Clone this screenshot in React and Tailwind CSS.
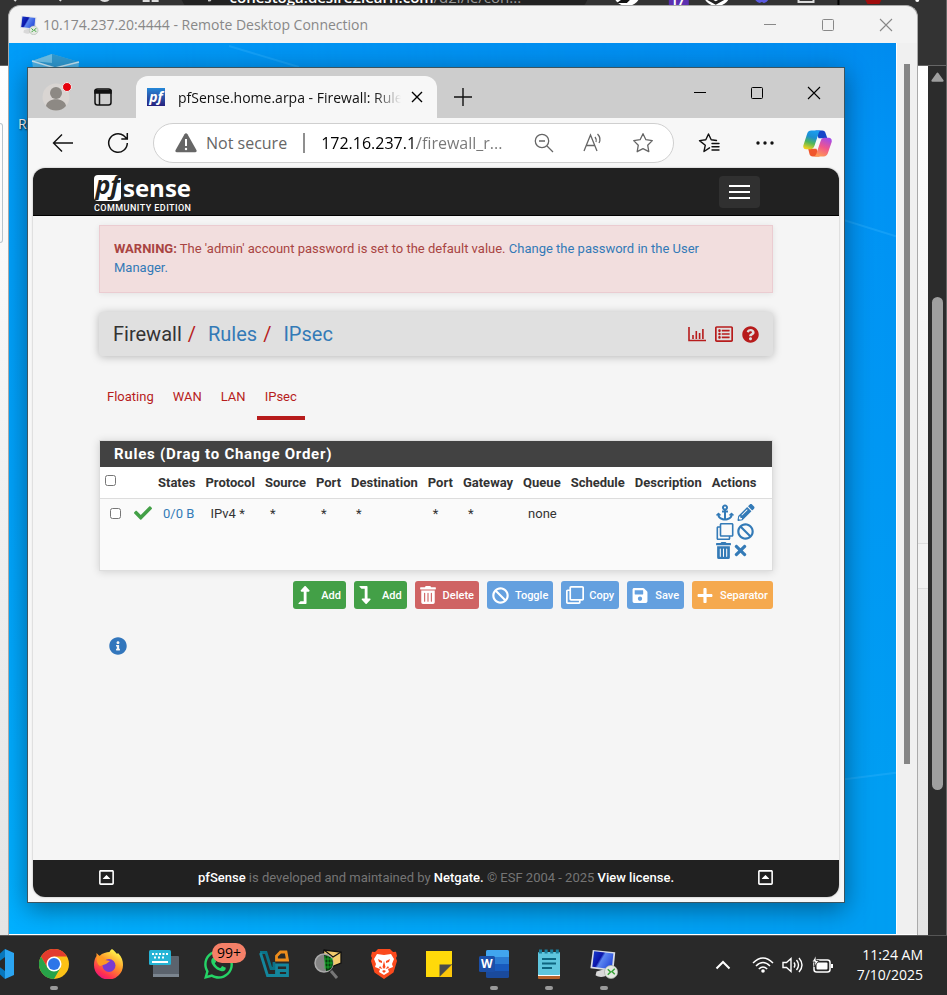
import React from "react";
import {
  FaAnchor, FaPencilAlt, FaRegClone, FaBan, FaTrashAlt, FaTimes, FaCheck, FaLevelUpAlt, FaLevelDownAlt,
  FaSave, FaPlus, FaInfoCircle, FaQuestionCircle, FaRegListAlt, FaRegCaretSquareUp, FaWhatsapp,
} from "react-icons/fa";

const ui = "font-['Open_Sans','Noto_Sans',sans-serif]";

function MinIcon({ size = 14 }) {
  return <svg width={size} height={size} viewBox="0 0 14 14" stroke="currentColor"><path d="M1 6.5h12" /></svg>;
}
function MaxIcon({ size = 14 }) {
  return <svg width={size} height={size} viewBox="0 0 14 14" fill="none" stroke="currentColor"><rect x="1.5" y="1.5" width="11" height="11" rx="1" /></svg>;
}
function CloseIcon({ size = 14 }) {
  return <svg width={size} height={size} viewBox="0 0 14 14" stroke="currentColor" strokeWidth="1.1"><path d="M1 1l12 12M13 1L1 13" /></svg>;
}

function RemoteDesktopIcon({ size }) {
  return (
    <svg width={size} height={size} viewBox="0 0 32 32">
      <defs>
        <linearGradient id="screenBlue" x1="0" y1="0" x2="1" y2="0.5">
          <stop offset="0" stopColor="#1a3fd0" /><stop offset="0.45" stopColor="#0a14a8" /><stop offset="0.55" stopColor="#5b86f0" /><stop offset="1" stopColor="#2c50dc" />
        </linearGradient>
      </defs>
      <path d="M8 24l10-3 3 6c-4 3-10 4-14 1z" fill="#d8d8d8" />
      <path d="M4 1l24 2.500-2 20L1.500 20.500z" fill="#d9dde6" />
      <path d="M5.500 2.500l20.500 2.300-1.700 16.700L3.500 19z" fill="url(#screenBlue)" />
      <circle cx="23.500" cy="24.500" r="7" fill="#e3e8e1" stroke="#a8b0a8" strokeWidth="0.800" />
      <path d="M20 21.500l3 3-3 3M27.500 21l-3 3 3 3" fill="none" stroke="#3aa53a" strokeWidth="1.600" />
    </svg>
  );
}

function CopilotIcon() {
  return (
    <svg width="29" height="29" viewBox="0 0 28 28">
      <defs>
        <linearGradient id="cpA" x1="0.600" y1="0" x2="0.300" y2="1">
          <stop offset="0" stopColor="#1b9df0" /><stop offset="0.350" stopColor="#1d8fd0" /><stop offset="0.650" stopColor="#4fb65a" /><stop offset="1" stopColor="#f4d01c" />
        </linearGradient>
        <linearGradient id="cpB" x1="0.700" y1="0" x2="0.300" y2="1">
          <stop offset="0" stopColor="#a44be8" /><stop offset="0.500" stopColor="#f0568c" /><stop offset="1" stopColor="#ff9a52" />
        </linearGradient>
      </defs>
      <path d="M12 1.500h6.500c2 0 2.800 1 3.300 2.700L23.500 9H15z" fill="#1546c8" />
      <path d="M16 26.500H9.500c-2 0-2.800-1-3.300-2.700L5 19h8z" fill="#f0562c" />
      <path d="M8 1.500h9c-1.500 1-2 2.500-2.500 4.500L11 16.500c-.7 2-1.800 3-3.800 3H3C.8 19.500-.2 18 .4 15.800L4 4.500C4.700 2.500 6 1.500 8 1.500z" fill="url(#cpA)" />
      <path d="M20 26.500h-9c1.500-1 2-2.500 2.500-4.500L17 11.500c.7-2 1.800-3 3.800-3H25c2.200 0 3.200 2 2.600 4.200L24 23.500c-.7 2-2 3-4 3z" fill="url(#cpB)" />
    </svg>
  );
}

function FavStar({ lines }) {
  return lines ? (
    <svg width="22" height="22" viewBox="0 0 22 22" fill="none" stroke="#111" strokeWidth="1.400" strokeLinejoin="round" strokeLinecap="round">
      <path d="M11.500 15.800L6 19.500l1.300-6.300L1.500 8.600l6.300-.8L10.500 2l2.700 5.800 5.300.7" />
      <path d="M14 11.500h7M14 14.700h7M14 18h7" />
    </svg>
  ) : (
    <svg width="22" height="22" viewBox="0 0 22 22" fill="none" stroke="#666" strokeWidth="1.300" strokeLinejoin="round">
      <path d="M11 1.700l2.900 6 6.400.9-4.600 4.600 1.100 6.500-5.800-3-5.800 3 1.100-6.500L1.700 8.600l6.400-.9z" />
    </svg>
  );
}

function HostBrowser() {
  return (
    <div className="flex h-full">
      <div className="flex min-w-0 flex-1 flex-col">
        <div className="h-[66px] shrink-0 overflow-hidden border-b border-[#666] bg-[#333]">
          <div className={`-mt-[15px] flex h-6 items-center text-white ${ui}`}>
            <svg width="180" height="24" viewBox="0 0 180 24" fill="none" stroke="#ddd" strokeWidth="2">
              <path d="M18 10l-5 3 3 3M58 10l4 3-2 3" /><circle cx="105" cy="10" r="6" />
              <path d="M144 8h5v8h-5zM153 8h5v8h-5z" />
            </svg>
            <div className="flex h-9 w-[410px] items-center rounded-b-3xl bg-[#222] pl-[28px]">
              <svg width="22" height="24" viewBox="0 0 22 24"><circle cx="1" cy="14" r="2.500" fill="#ccc" /></svg>
              <span className="text-[15px] leading-6 font-semibold whitespace-nowrap">conestoga.desire2learn.com<span className="font-normal text-[#999]">/d2l/le/con...</span></span>
            </div>
            <svg width="340" height="24" viewBox="590 0 340 24">
              <circle cx="628" cy="7" r="14" fill="#fff" /><path d="M618 18l8-6h8l-6 6z" fill="#111" />
              <rect x="670" y="4" width="20" height="18" fill="#5b2fb0" />
              <text x="672" y="20" fill="#fff" fontSize="12" fontWeight="700">17</text>
              <circle cx="718" cy="7" r="14" fill="#fff" /><path d="M708 13l9 5 9-5" fill="none" stroke="#222" strokeWidth="3" />
              <path d="M757 12q5 8 6 0q2 8 6 0" stroke="#5a5ae0" strokeWidth="4" fill="none" />
              <rect x="800" y="5" width="15" height="12" fill="none" stroke="#ddd" strokeWidth="2" />
              <path d="M840 13v8" stroke="#000" strokeWidth="2" /><path d="M866 13h18l-3 6h-12z" fill="#a00c0c" />
              <circle cx="919" cy="15" r="2" fill="#fff" />
            </svg>
          </div>
        </div>
        <div className="flex flex-1 justify-between bg-gradient-to-b from-white via-[#f0f0f0] to-[#e4e4e4]">
          <div className="mt-[57px] h-[120px] w-[3px] rounded-r border border-l-0 border-[#b8c4cc]" />
          <div className="mt-[477px] h-[46px] w-2.5 border-y border-[#ddd] bg-[#f2f2f2]" />
        </div>
      </div>
      <div className="flex w-[19px] flex-col items-center border-r border-[#666] bg-[#2c2c2c]">
        <div className="h-[66px] w-full shrink-0 border-b border-[#666] bg-[#333]" />
        <svg className="mt-1.5 shrink-0" width="13" height="10" viewBox="0 0 13 10"><path d="M5.500 1.200q1-1.500 2 0l5 7q.5 1.500-1 1.500h-10q-1.500 0-1-1.500z" fill="#9f9f9f" /></svg>
        <div className="mt-[215px] h-[493px] w-[11px] shrink-0 rounded-full bg-[#9f9f9f]" />
      </div>
    </div>
  );
}

function TabStrip() {
  return (
    <div className="flex h-[50px] bg-[#cdcdcd]">
      <button aria-label="Profile" className="ml-[14px] mt-[14px] h-7 w-7 self-start rounded-full">
        <svg width="32" height="30" viewBox="0 0 32 30">
          <circle cx="14" cy="15" r="13.500" fill="#d9d5d2" /><circle cx="14" cy="11" r="6" fill="#8d8984" />
          <path d="M4 24c1-9 19-9 20 0-5 6-15 6-20 0z" fill="#8d8984" />
          <circle cx="25" cy="5" r="4.500" fill="#e6000c" stroke="#eee" />
        </svg>
      </button>
      <button aria-label="Tab actions" className="ml-6 mt-[20px] self-start">
        <svg width="18" height="18" viewBox="0 0 18 18" fill="none" stroke="#111" strokeWidth="1.500"><rect x="1" y="1" width="16" height="16" rx="2.500" /><path d="M1 2.500h16v2.500H1z" fill="#111" /><path d="M5.500 5v12" /></svg>
      </button>
      <div className="ml-6 mt-2 flex w-[301px] items-center rounded-t-xl bg-[#f7f7f7] pl-[11px]">
        <span className="flex h-[18px] w-[18px] items-center justify-center bg-gradient-to-b from-[#2488d8] to-[#26207e] text-[14px] leading-[18px] font-bold text-white italic font-['Open_Sans',sans-serif]">pf</span>
        <span className="ml-[13px] w-[223px] overflow-hidden text-[14px] whitespace-nowrap text-[#111] [mask-image:linear-gradient(90deg,#000_88%,transparent)]">pfSense.home.arpa - Firewall: Rules: IPsec</span>
        <button aria-label="Close tab" className="ml-[10px] text-black"><svg width="12" height="12" viewBox="0 0 12 12" stroke="currentColor" strokeWidth="1.400"><path d="M1 1l10 10M11 1L1 11" /></svg></button>
      </div>
      <button aria-label="New tab" className="ml-[17px] mt-5 self-start"><svg width="18" height="18" viewBox="0 0 18 18" stroke="#111" strokeWidth="1.400"><path d="M9 0v18M0 9h18" /></svg></button>
      <div className="mr-0.5 ml-auto flex text-black">
        <button aria-label="Minimize" className="flex w-[57px] items-center justify-center"><MinIcon /></button>
        <button aria-label="Maximize" className="flex w-[57px] items-center justify-center"><MaxIcon /></button>
        <button aria-label="Close" className="flex w-[57px] items-center justify-center"><CloseIcon /></button>
      </div>
    </div>
  );
}

function Toolbar() {
  return (
    <div className="flex h-[50px] items-center">
      <button aria-label="Back" className="ml-6"><svg width="22" height="20" viewBox="0 0 22 20" fill="none" stroke="#111" strokeWidth="1.400"><path d="M21 10H1.500M10 1.500L1.500 10l8.500 8.500" /></svg></button>
      <button aria-label="Refresh" className="ml-[33px]"><svg width="22" height="22" viewBox="0 0 22 22" fill="none" stroke="#111" strokeWidth="1.500"><path d="M20.300 11a9.300 9.300 0 1 1-3.500-7.300L20 6.800M20.300 1v6h-6" /></svg></button>
      <div className="ml-6 flex h-10 min-w-0 flex-1 items-center rounded-full border border-[#cfcfcf] bg-white pr-[19px] pl-[21px]">
        <svg width="22" height="20" viewBox="0 0 22 20"><path d="M9.500 1.200q1.500-2 3 0l9 16q.6 2-1.500 2H2q-2.100 0-1.500-2z" fill="#666" /><path d="M11 6v7" stroke="#fff" strokeWidth="2" /><circle cx="11" cy="16" r="1.200" fill="#fff" /></svg>
        <span className="ml-[9px] text-[16px] whitespace-nowrap text-[#666]">Not secure</span>
        <span className="mx-4 h-5 w-0.5 shrink-0 bg-[#8f8f8f]" />
        <input aria-label="Address" readOnly value="172.16.237.1/firewall_r..." className="min-w-0 flex-1 bg-[linear-gradient(90deg,#000_96px,#777_96px)] bg-clip-text text-[16px] text-transparent outline-none" />
        <div className="flex items-center gap-7">
          <button aria-label="Zoom out"><svg width="20" height="20" viewBox="0 0 20 20" fill="none" stroke="#666" strokeWidth="1.300"><circle cx="8" cy="8" r="6.700" /><path d="M5 8h6M13 13l6 6" /></svg></button>
          <button aria-label="Read aloud"><svg width="22" height="22" viewBox="0 0 22 22" fill="none" stroke="#666" strokeWidth="1.300"><path d="M2 19L8.500 3 15 19M4.500 13.500h8M13 5q2 2.500 1 5M15.500 2q4 4 1.500 9" /></svg></button>
          <button aria-label="Add to favorites"><FavStar /></button>
        </div>
      </div>
      <button aria-label="Favorites" className="ml-6"><FavStar lines /></button>
      <button aria-label="Settings and more" className="ml-9"><svg width="18" height="6" viewBox="0 0 18 6" fill="#111"><circle cx="2" cy="3" r="1.700" /><circle cx="9" cy="3" r="1.700" /><circle cx="16" cy="3" r="1.700" /></svg></button>
      <button aria-label="Copilot" className="mr-3 ml-[29px]"><CopilotIcon /></button>
    </div>
  );
}

const headings = ["States", "Protocol", "Source", "Port", "Destination", "Port", "Gateway", "Queue", "Schedule", "Description", "Actions"];
const rowCells = ["0/0 B", "IPv4 *", "*", "*", "*", "*", "*", "none", "", ""];
const actions = [
  ["Go to gateway rule", FaAnchor, "h-[17px] w-[18px]"], ["Edit", FaPencilAlt, "h-[17px] w-[18px]"], ["Copy", FaRegClone, "h-[17px] w-[18px]"],
  ["Disable", FaBan, "h-[17px] w-[17px]"], ["Delete", FaTrashAlt, "h-[17px] w-[15px]"], ["Kill states", FaTimes, "h-[17px] w-[13px]"],
];
const buttons = [
  ["Add", FaLevelUpAlt, "bg-[#43a047]", "h-[18px] w-[12px]"], ["Add", FaLevelDownAlt, "bg-[#43a047]", "h-[18px] w-[12px]"],
  ["Delete", FaTrashAlt, "bg-[#cf6363]", "h-[18px] w-[16px]"], ["Toggle", FaBan, "bg-[#64a0df]", "h-[17px] w-[17px]"],
  ["Copy", FaRegClone, "bg-[#64a0df]", "h-[18px] w-[18px]"], ["Save", FaSave, "bg-[#64a0df]", "h-[17px] w-[16px]"],
  ["Separator", FaPlus, "bg-[#f5a94e]", "h-[17px] w-[16px]"],
];

function FirewallPage() {
  return (
    <div className="mx-[5px] mb-[5px] flex flex-1 flex-col overflow-hidden rounded-xl bg-[#f5f5f5] text-[13px] leading-[19px] font-['Roboto',sans-serif] text-[#333] shadow-[0_0_2px_rgba(0,0,0,0.35)]">
      <header className="flex h-12 items-center justify-between border-b border-black bg-[#212121] pr-[79px] pl-[61px]">
        <a href="#home" aria-label="pfSense community edition" className="flex flex-col pt-1 text-white">
          <span className="flex items-end font-['Open_Sans',sans-serif]">
            <span className="flex h-[26px] w-[27px] items-center justify-center rounded-sm bg-white text-[25px] leading-none font-bold text-[#212121] italic"><span className="-mt-1.5">pf</span></span>
            <span className="ml-0.5 text-[24px] leading-[26px] font-bold">sense</span>
          </span>
          <span className="mt-0.5 text-[9px] leading-[10px] font-medium tracking-wider">COMMUNITY EDITION</span>
        </a>
        <button aria-label="Toggle navigation" className="flex h-8 w-[41px] flex-col items-center justify-center gap-1 rounded bg-[#303030]">
          <span className="h-0.5 w-[21px] bg-white" /><span className="h-0.5 w-[21px] bg-white" /><span className="h-0.5 w-[21px] bg-white" />
        </button>
      </header>
      <main className="flex-1 px-[66px] pt-[9px]">
        <div className="border border-[#ebccd1] bg-[#f2dede] pt-[13px] pr-[50px] pb-[15px] pl-[14px] text-[#a94442] shadow-[0_1px_6px_rgba(0,0,0,0.08)]">
          <b>WARNING:</b> The 'admin' account password is set to the default value. <a href="#password" className="text-[#337ab7]">Change the password in the User Manager.</a>
        </div>
        <div className="mt-[19px] flex h-11 items-center justify-between rounded bg-[#e0e0e0] px-[14px] shadow-[0_1px_8px_rgba(0,0,0,0.25)]">
          <nav aria-label="Breadcrumb" className="flex text-[20px]">
            <span>Firewall</span><span className="mx-[6px] pr-[6px] text-[#b71c1c]">/</span>
            <a href="#rules" className="text-[#337ab7]">Rules</a><span className="mx-[6px] pr-[6px] text-[#b71c1c]">/</span>
            <a href="#ipsec" className="text-[#337ab7]">IPsec</a>
          </nav>
          <div className="flex items-center gap-[9px] text-[#b71c1c]">
            <a href="#status" aria-label="Status"><svg width="18" height="16" viewBox="0 0 18 16" fill="none" stroke="currentColor" strokeWidth="1.600"><path d="M1 1v13.500h17" /><path d="M5 9v4M8.300 5v8M11.600 7v6M14.900 3v10" /></svg></a>
            <a href="#log" aria-label="Log"><FaRegListAlt className="h-[18px] w-[18px]" /></a>
            <a href="#help" aria-label="Help"><FaQuestionCircle className="h-[17px] w-[17px]" /></a>
          </div>
        </div>
        <nav aria-label="Interfaces" className="mt-[31px] flex gap-[3px] text-[#b71c1c]">
          {["Floating", "WAN", "LAN", "IPsec"].map((t) => (
            <a key={t} href={"#" + t} className={"flex h-[33px] border-b-4 px-2 " + (t === "IPsec" ? "border-[#b71c1c]" : "border-transparent")}>{t}</a>
          ))}
        </nav>
        <section className="mt-5 border border-[#ddd] bg-white shadow-[0_1px_8px_rgba(0,0,0,0.15)]">
          <h2 className="bg-[#424242] px-[14px] py-[3px] text-[15px] leading-5 font-bold tracking-wider text-white">Rules (Drag to Change Order)</h2>
          <table className="w-full text-left">
            <thead>
              <tr className="border-b border-[#ddd]">
                <th className="px-[5px] pt-2 align-top"><input type="checkbox" aria-label="Select all rules" className="block h-[11px] w-[11px]" /></th>
                <th aria-label="Status" />
                {headings.map((h, i) => (
                  <th key={i} className={"h-[31px] px-[5px] font-bold whitespace-nowrap" + (i === 10 ? " w-full" : "")}>{h}</th>
                ))}
              </tr>
            </thead>
            <tbody>
              <tr className="h-[72px] bg-[#fafafa] align-top">
                <td className="pt-[9px] pr-1 pl-[10px]"><input type="checkbox" aria-label="Select rule" className="block h-[11px] w-[11px]" /></td>
                <td className="pt-[5px] pr-px pl-[9px]"><FaCheck title="Pass" className="h-[18px] w-[18px] text-[#43a047]" /></td>
                {rowCells.map((c, i) => (
                  <td key={i} className="pt-[5px] pl-[10px] whitespace-nowrap">{i === 0 ? <a href="#states" className="text-[#337ab7]">{c}</a> : c}</td>
                ))}
                <td className="pt-[5px] pl-[9px]">
                  <div className="flex w-[44px] flex-wrap gap-x-[3px] gap-y-[2px] text-[#337ab7]">
                    {actions.map(([n, I, c]) => <a key={n} href={"#" + n} aria-label={n}><I className={c} /></a>)}
                  </div>
                </td>
              </tr>
            </tbody>
          </table>
        </section>
        <div className="mt-[10px] flex justify-end gap-2">
          {buttons.map(([n, I, bg, c], i) => (
            <button key={i} className={"flex h-7 items-center gap-[5px] rounded-[3px] px-[5px] text-[11px] font-medium text-white " + bg}>
              <span className="flex w-[18px]"><I className={c} /></span>{n}
            </button>
          ))}
        </div>
        <button aria-label="Information" className="mt-7 ml-[10px] block text-[#3276bc]"><FaInfoCircle className="h-[18px] w-[18px]" /></button>
      </main>
      <footer className="flex h-[37px] items-center justify-between bg-[#212121] px-[65px] pb-0.5 text-[#757575]">
        <a href="#top" aria-label="Scroll to top" className="text-white"><FaRegCaretSquareUp className="h-[17px] w-[17px]" /></a>
        <p><a href="#pfsense" className="font-medium text-white">pfSense</a> is developed and maintained by <a href="#netgate" className="font-medium text-white">Netgate.</a> © ESF 2004 - 2025 <a href="#license" className="font-medium text-white">View license.</a></p>
        <a href="#top" aria-label="Back to top" className="text-white"><FaRegCaretSquareUp className="h-[17px] w-[17px]" /></a>
      </footer>
    </div>
  );
}

function RemoteWindow() {
  return (
    <div className="absolute top-[5px] right-[29px] bottom-0 left-2 flex flex-col overflow-hidden rounded-t-xl border border-b-0 border-[#aaa] bg-[#f3f3f3]">
      <div className="flex h-[37px] shrink-0 items-center pl-[10px] text-[#888]">
        <RemoteDesktopIcon size={20} />
        <span className="ml-1 text-[14px]">10.174.237.20:4444 - Remote Desktop Connection</span>
        <div className="mr-0.5 ml-auto flex">
          <button aria-label="Minimize window" className="flex w-[58px] justify-center"><MinIcon /></button>
          <button aria-label="Maximize window" className="flex w-[58px] justify-center"><MaxIcon /></button>
          <button aria-label="Close window" className="flex w-[58px] justify-center"><CloseIcon /></button>
        </div>
      </div>
      <div className="flex min-h-0 flex-1 border-b border-white">
        <div className="relative flex-1 overflow-hidden border-r border-white bg-[linear-gradient(180deg,#009cf8_0%,#00a2fa_50%,#00b0ff_100%)]">
          <svg className="absolute inset-0 h-full w-full" viewBox="0 0 887 890" preserveAspectRatio="none">
            <defs><linearGradient id="wall" x1="0" y1="0" x2="0.200" y2="1"><stop offset="0" stopColor="#0080e6" /><stop offset="0.300" stopColor="#0092f4" /><stop offset="1" stopColor="#009df2" /></linearGradient>
            <linearGradient id="wallFade"><stop offset="0" stopColor="#fff" stopOpacity="0" /><stop offset="1" stopColor="#fff" /></linearGradient>
            <mask id="wallMask"><rect width="887" height="890" fill="url(#wallFade)" /></mask></defs>
            <rect width="887" height="890" fill="url(#wall)" mask="url(#wallMask)" />
            <path d="M800 166L887 193M800 740L887 729M220 3L290 24" stroke="#3fb8ff" strokeWidth="2" opacity="0.300" />
          </svg>
          <svg className="absolute top-[10px] left-[22px]" width="50" height="50" viewBox="0 0 50 50"><path d="M1 8L21 1l27 8-3 34H6z" fill="#4db2e6" /><path d="M1 8L21 1l27 8-24 7z" fill="#2f9ad2" /><path d="M21 1v9L1 8z" fill="#6cc0e8" /><path d="M1 8l23 7 24-6" fill="none" stroke="#c4e4f4" strokeWidth="1.500" /></svg>
          <span className="absolute top-[70px] left-[9px] text-[14px] whitespace-nowrap text-white [text-shadow:1px_1px_2px_#000]">Recycle Bin</span>
          <div className="absolute top-6 right-[51px] bottom-[31px] left-[18px] flex flex-col border border-[#3c5560] bg-[#f7f7f7] shadow-[0_6px_24px_rgba(0,0,0,0.4)]">
            <TabStrip />
            <Toolbar />
            <FirewallPage />
          </div>
        </div>
        <div className="flex w-5 justify-center bg-[#f0f0f0]"><div className="mt-[21px] h-[700px] w-1.5 bg-[#858585]" /></div>
      </div>
    </div>
  );
}

function Word() {
  return <svg width="30" height="28" viewBox="0 0 30 28"><rect x="7" y="0" width="23" height="28" rx="1.500" fill="#1a4a9c" /><path d="M7 1.500Q7 0 8.500 0h20Q30 0 30 1.500V7H7z" fill="#41a5ee" /><path d="M7 7h23v7H7z" fill="#2b7cd3" /><path d="M7 14h23v7H7z" fill="#185abd" /><rect y="6" width="16" height="16" rx="1.500" fill="#1b4fa8" /><text x="2" y="18" fill="#fff" fontSize="12" fontWeight="700">W</text></svg>;
}

const apps = [
  ["Visual Studio Code", false, <svg width="32" height="32" viewBox="0 0 32 32"><path d="M22 1l9 4v22l-9 4z" fill="#2ba5f2" /><path d="M22 1L3 18l3 3 16-12v14L6 11l-3 3 19 17z" fill="#0877bd" /></svg>],
  ["Google Chrome", true, <svg width="30" height="30" viewBox="0 0 30 30"><circle cx="15" cy="15" r="15" fill="#fbc116" /><path d="M2 7.500A15 15 0 0 1 28 7.500H15l-6.500 11.200z" fill="#e33b2e" /><path d="M2 7.500l6.500 11.300 13-.0L15 30A15 15 0 0 1 2 7.500z" fill="#27a349" /><circle cx="15" cy="15" r="7.500" fill="#fff" /><circle cx="15" cy="15" r="6" fill="#2d76e8" /></svg>],
  ["Firefox", false, <svg width="30" height="30" viewBox="0 0 30 30"><defs><linearGradient id="ff" x1="0.800" y1="0" x2="0.200" y2="1"><stop offset="0.100" stopColor="#fff04a" /><stop offset="0.450" stopColor="#ff9428" /><stop offset="0.800" stopColor="#ff2f52" /><stop offset="1" stopColor="#e0108a" /></linearGradient></defs><path d="M18 0c3 2 4 4 5 5l1-1c4 4 5 8 5 12a14.500 14.500 0 0 1-29 0c0-4 1-7 2.500-9V4l3 3c3-3 7-4 10-4 .5-1 1-2 2.500-3z" fill="url(#ff)" /><circle cx="15" cy="16.500" r="6.500" fill="#7a3bd0" /><path d="M3 7c4-1 7 1 8 4l5 1-4 3-6 2c-3-2-4-6-3-10z" fill="#ff9a22" /></svg>],
  ["Touch keyboard", false, <svg width="30" height="28" viewBox="0 0 30 28"><rect x="4" y="6" width="26" height="21" rx="1" fill="#5b636d" /><path d="M4 24h26v3H4z" fill="#7b858f" /><rect width="22" height="15" rx="1.500" fill="#25b4d6" /><path d="M3 4h16" stroke="#fff" strokeWidth="2" strokeDasharray="2 1.500" /><path d="M5 7.500h12" stroke="#fff" strokeWidth="2" strokeDasharray="2 2" /><path d="M3 12h16" stroke="#fff" strokeWidth="2" /></svg>],
  ["WhatsApp", false, <span className="relative block"><FaWhatsapp className="h-[33px] w-[33px] text-[#25d366]" /><span className={`absolute -top-[5px] left-[10px] rounded-full bg-[#f58068] px-[5px] text-[14px] leading-5 text-black ${ui}`}>99+</span></span>],
  ["VMware", false, <svg width="30" height="28" viewBox="0 0 30 28" fill="none" strokeWidth="2.800"><path d="M1 2.500h6l5 16h3V12" stroke="#0b7388" /><path d="M1.500 3l7 22.500h9V15h11v10.500h-9v-5h9" stroke="#14869c" /><path d="M17.500 10V6l4-4H27l1.500 8z" stroke="#ee8d1c" /></svg>],
  ["Network Analyzer", false, <svg width="30" height="32" viewBox="0 0 30 32"><path d="M10 2l17 2v11l-10 4-9-4z" fill="#f2cb6c" stroke="#111" strokeWidth="1.300" /><path d="M10 2l9 7 8-5" fill="none" stroke="#111" strokeWidth="1.300" /><path d="M17 23l6 7" stroke="#777" strokeWidth="3" /><circle cx="10" cy="15" r="9" fill="#848484" stroke="#aaa" strokeWidth="1.500" /><path d="M10 7q9 1 9 8t-7 8z" fill="#073c0d" /><path d="M11 8v13M14 8v13M17 10v9M11 11h8M11 15h8M11 19h6" stroke="#18c832" strokeWidth="0.700" /></svg>],
  ["Brave", false, <svg width="26" height="30" viewBox="0 0 26 30"><path d="M7 0h12l3 3 3-.2 1 4.200-1 2 1 3-3.500 11.500L13 30 3.500 23.500 0 12l1-3-1-2 1-4.200L4 3z" fill="#fb4a1d" /><path d="M6 5l7 1 7-1 3 5-2 5 1 3-5 2 1 3-5 3-5-3 1-3-5-2 1-3-2-5z" fill="#fff" /><path d="M7 10l4 2v2l-3-1zM19 10l-4 2v2l3-1zM13 12l1.500 6-1.500 2-1.500-2zM9 17l2.500 3L8 19zM17 17l-2.500 3 3.500-1zM11 22l2-1 2 1-2 2z" fill="#fb4a1d" /></svg>],
  ["Sticky Notes", false, <svg width="26" height="26" viewBox="0 0 26 26"><path d="M0 0h26v13L14 26H0z" fill="#ffd90a" /><path d="M13.500 13.500H26L13.500 26z" fill="#4a4a4a" /><path d="M26 13.500V26H13.500z" fill="#fcc60a" /></svg>],
  ["Word", true, <Word />],
  ["Notepad", true, <svg width="24" height="30" viewBox="0 0 24 30"><rect x="1" y="25" width="22" height="5" rx="1" fill="#b5622b" /><path d="M1 25h22v2H1z" fill="#fff" /><rect x="1" y="3" width="22" height="23" rx="1" fill="#5fc6de" /><path d="M5 10h14M5 14.500h14M5 19h10" stroke="#0e6580" strokeWidth="2" /><path d="M2 2.500h20" stroke="#1c7f9c" strokeWidth="4" strokeDasharray="3 2.600" /></svg>],
  ["Remote Desktop", true, <RemoteDesktopIcon size={30} />],
];

function Taskbar() {
  return (
    <div className="flex h-[60px] shrink-0 items-center overflow-hidden border-t border-[#555] bg-[#292929]">
      <div className="-ml-[29px] flex">
        {apps.map(([name, running, icon]) => (
          <button key={name} aria-label={name} className="flex h-[58px] w-[55px] flex-col items-center">
            <span className="flex h-[49px] items-center justify-center pt-1.5">{icon}</span>
            {running && <span className="h-1 w-2 rounded-full bg-[#9a9a9a]" />}
          </button>
        ))}
      </div>
      <div className={`ml-auto flex items-center pr-6 pb-0.5 text-white ${ui}`}>
        <button aria-label="Show hidden icons" className="mr-[21px]"><svg width="16" height="10" viewBox="0 0 16 10" fill="none" stroke="#fff" strokeWidth="2"><path d="M1.500 8.500L8 2l6.500 6.500" /></svg></button>
        <button aria-label="Network, volume and battery" className="flex items-center gap-2">
          <svg width="22" height="18" viewBox="0 0 22 18" fill="none" stroke="#fff" strokeWidth="1.500"><path d="M1 7q10-10 20 0M4 10q7-7 14 0M6.800 13q4.200-4 8.400 0" /><circle cx="11" cy="15" r="1.800" fill="#fff" stroke="none" /></svg>
          <svg width="22" height="18" viewBox="0 0 22 18" fill="none" stroke="#fff" strokeWidth="1.400"><path d="M1 6.500h3.500L9 2.500v13l-4.500-4H1zM12 6.500q1.800 2.500 0 5M14.500 4q4 5 0 10M17 2q6 7 0 14" /></svg>
          <svg width="22" height="18" viewBox="0 0 22 18"><rect x="2" y="4" width="16" height="12" rx="2.500" fill="none" stroke="#fff" strokeWidth="1.500" /><rect x="4.500" y="6.500" width="11" height="7" rx="1" fill="#fff" /><path d="M19 8h2v4h-2z" fill="#fff" /><path d="M4-.5L0 6h3l-1 5 5-6.500H4z" fill="#fff" stroke="#292929" strokeWidth="0.800" /></svg>
        </button>
        <time className="ml-[23px] text-right text-[14px] leading-5 whitespace-nowrap"><span className="block">11:24 AM</span><span className="block">7/10/2025</span></time>
      </div>
    </div>
  );
}

export default function App() {
  return (
    <div className={`flex h-screen flex-col overflow-hidden bg-[#292929] ${ui}`}>
      <div className="relative min-h-0 flex-1">
        <HostBrowser />
        <RemoteWindow />
      </div>
      <Taskbar />
    </div>
  );
}
